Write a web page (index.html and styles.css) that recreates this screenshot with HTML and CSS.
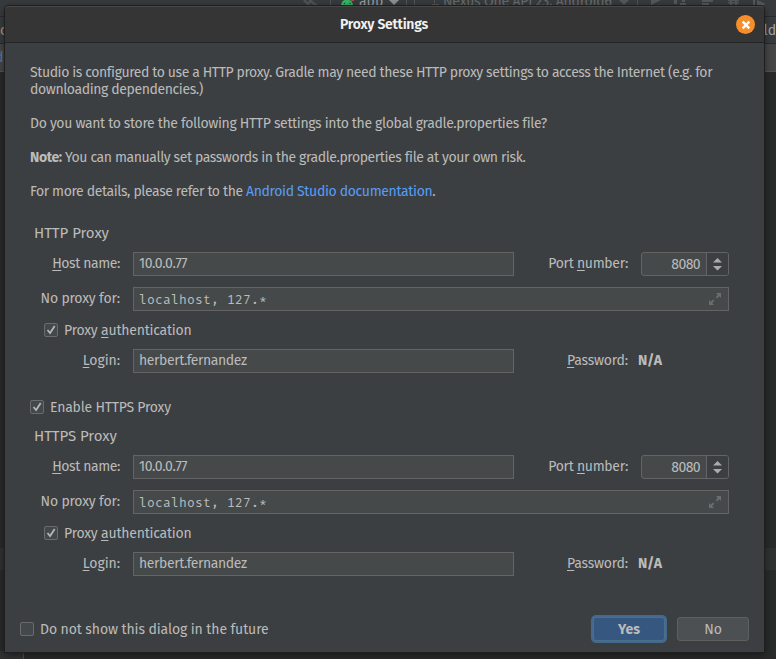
FILE: index.html
```html
<!DOCTYPE html>
<html lang="en">
<head>
<meta charset="utf-8">
<title>Proxy Settings</title>
<link rel="stylesheet" href="styles.css">
</head>
<body>
<div class="ide" aria-hidden="true">
  <div class="ide-toolbar">
    <svg class="ide-tools" width="776" height="16" viewBox="0 0 776 16">
      <path d="M304 0l4 4 4-4M309 0l8 6" stroke="#505254" stroke-width="2.5" fill="none"/>
      <path d="M330.500 0v8M406.500 0v8M414.500 0v8M637.500 0v8" stroke="#525557"/>
      <path d="M341 5.500a6 6 0 0 1 12 0z" fill="#35b565"/>
      <circle cx="344.500" cy="3.500" r=".7" fill="#303335"/><circle cx="350" cy="3.500" r=".7" fill="#303335"/>
      <path d="M351 0h3v1h-3z" fill="#bd4b4b"/>
      <path d="M389 0h10l-5 5z" fill="#8d9092"/>
      <path d="M432 4.500h7M434.500 0v3" stroke="#555859"/>
      <path d="M619 0h10l-5 5zM651 0h10l-10 5zM674 0h3v4h-3zM682 0h3v2h-3zM680 3h6v2h-6zM702 0h11v2h-11zM702 3h7v2h-7zM728 0h11v1h-11zM730 0h2v5h-2zM735 0h2v5h-2zM728 2h11v1.500h-11zM753 0h2v5h-2zM757 0l9 4-5 2-4 1z" fill="#555859"/>
    </svg>
    <span class="ide-app">app</span>
    <span class="ide-device">Nexus One API 23, Android6</span>
  </div>
  <div class="ide-nav"><span class="ide-nav-left">lo</span><span>ld</span></div>
  <div class="ide-tabs"><span>d</span></div>
  <div class="ide-editor"><div class="ide-panel"></div><div class="ide-stripe"></div></div>
</div>

<main class="dialog">
  <header class="titlebar">
    <h1>Proxy Settings</h1>
    <button class="close" aria-label="Close"><svg width="18" height="18" viewBox="0 0 18 18"><path d="M5.700 5.700l6.600 6.600M12.300 5.700l-6.600 6.600" stroke="#fff" stroke-width="2.400"/></svg></button>
  </header>
  <div class="content">
    <section class="message">
      <p><span class="m1">Studio is configured to use a HTTP proxy. Gradle may need these HTTP proxy settings to access the Internet (e.g. for</span><br><span>downloading dependencies.)</span></p>
      <p class="m3">Do you want to store the following HTTP settings into the global gradle.properties file?</p>
      <p><b>Note:</b> You can manually set passwords in the gradle.properties file at your own risk.</p>
      <p>For more details, please refer to the <a>Android Studio documentation</a>.</p>
    </section>

    <section class="proxy">
      <h2>HTTP Proxy</h2>
      <div class="row">
        <label class="host"><u>H</u>ost name:</label><div class="field">10.0.0.77</div>
        <label class="port">Port <u>n</u>umber:</label>
        <div class="spinner"><span>8080</span><svg width="21" height="22" viewBox="0 0 21 22"><path d="M6 9.500h9L10.500 5zM6 13h9l-4.500 4.500z" fill="#a9abac"/></svg></div>
      </div>
      <div class="row second">
        <label>No proxy for:</label><div class="field mono wide">localhost, 127.*<svg width="14" height="14" viewBox="0 0 14 14"><path d="M8 1h5v5l-1.700-1.700L9 6.500 7.700 5.200 9.800 3zM1 8l1.800 1.700L5 7.500l1.300 1.300L4.200 11 6 13H1z" fill="#686f71"/></svg></div>
      </div>
      <div class="check auth"><i class="box"><svg width="14" height="14" viewBox="0 0 14 14"><path d="M3.500 7l2.600 3 4.600-7" fill="none" stroke="#b5b7b7" stroke-width="1.800"/></svg></i><span>Proxy <u>a</u>uthentication</span></div>
      <div class="row third">
        <label class="login"><u>L</u>ogin:</label><div class="field">herbert.fernandez</div>
        <label><u>P</u>assword:</label><b class="na">N/A</b>
      </div>
    </section>

    <div class="check enable"><i class="box"><svg width="14" height="14" viewBox="0 0 14 14"><path d="M3.500 7l2.600 3 4.600-7" fill="none" stroke="#b5b7b7" stroke-width="1.800"/></svg></i><span>Enable HTTPS Proxy</span></div>

    <section class="proxy https">
      <h2>HTTPS Proxy</h2>
      <div class="row">
        <label class="host"><u>H</u>ost name:</label><div class="field">10.0.0.77</div>
        <label class="port">Port <u>n</u>umber:</label>
        <div class="spinner"><span>8080</span><svg width="21" height="22" viewBox="0 0 21 22"><path d="M6 9.500h9L10.500 5zM6 13h9l-4.500 4.500z" fill="#a9abac"/></svg></div>
      </div>
      <div class="row second">
        <label>No proxy for:</label><div class="field mono wide">localhost, 127.*<svg width="14" height="14" viewBox="0 0 14 14"><path d="M8 1h5v5l-1.700-1.700L9 6.500 7.700 5.200 9.800 3zM1 8l1.800 1.700L5 7.500l1.300 1.300L4.200 11 6 13H1z" fill="#686f71"/></svg></div>
      </div>
      <div class="check auth"><i class="box"><svg width="14" height="14" viewBox="0 0 14 14"><path d="M3.500 7l2.600 3 4.600-7" fill="none" stroke="#b5b7b7" stroke-width="1.800"/></svg></i><span>Proxy <u>a</u>uthentication</span></div>
      <div class="row third">
        <label class="login"><u>L</u>ogin:</label><div class="field">herbert.fernandez</div>
        <label><u>P</u>assword:</label><b class="na">N/A</b>
      </div>
    </section>
  </div>
  <footer>
    <div class="check again"><i class="box"></i><span>Do not show this dialog in the future</span></div>
    <button class="btn yes">Yes</button>
    <button class="btn">No</button>
  </footer>
</main>
</body>
</html>
```
FILE: styles.css
```css
* { box-sizing: border-box; }
body {
  margin: 0;
  width: 776px;
  height: 659px;
  overflow: hidden;
  position: relative;
  background: #292929;
  color: #bbbbbb;
  font: 14px/17px "Fira Sans", "Noto Sans", sans-serif;
  font-stretch: 85%;
}
h1, h2, p { margin: 0; font-weight: 400; }
u { text-decoration: underline; text-underline-offset: 2px; text-decoration-thickness: 1px; text-decoration-skip-ink: none; }
svg { display: block; flex: none; }

.ide { height: 659px; display: flex; flex-direction: column; color: #686b6d; }
.ide-toolbar { position: relative; height: 17px; background: #383b3d; border-bottom: 1px solid #292b2c; }
.ide-tools { position: absolute; left: 0; top: 0; }
.ide-app, .ide-device { position: absolute; top: -7px; white-space: nowrap; }
.ide-app { left: 359px; color: #9a9c9e; }
.ide-device { left: 443px; letter-spacing: -.2px; }
.ide-nav { height: 27px; padding: 5px 0 0; display: flex; justify-content: space-between; background: #393c3e; border-bottom: 1px solid #292b2c; color: #a2a4a5; }
.ide-nav-left { margin-left: -4px; color: #b39973; }
.ide-tabs { height: 28px; padding-top: 5px; background: #454645; border-bottom: 1px solid #555; color: #587ca6; }
.ide-tabs span { margin-left: -5px; }
.ide-editor { flex: 1; display: flex; flex-direction: column; justify-content: space-between; padding-top: 476px; background: #292a2a; }
.ide-panel { height: 22px; background: #303131; }
.ide-stripe { height: 8px; width: 24px; background: #303132; border-right: 1px solid #4b4c4c; }

.dialog {
  position: absolute;
  left: 5px;
  top: 6px;
  width: 759px;
  height: 646px;
  display: flex;
  flex-direction: column;
  background: #3c3f41;
  border-radius: 4px 4px 0 0;
  box-shadow: 0 0 0 1px #1e1f20, 0 2px 8px rgba(0, 0, 0, .55);
}
.titlebar {
  height: 37px;
  flex: none;
  display: grid;
  grid-template-columns: 1fr auto 1fr;
  align-items: center;
  padding-right: 9px;
  background: #353535;
  border-top: 1px solid #484848;
  border-bottom: 1px solid #222426;
  border-radius: 4px 4px 0 0;
}
.titlebar h1 { grid-column: 2; padding-left: 8px; font-size: 14px; line-height: 18px; font-weight: 600; letter-spacing: -.25px; color: #f2f2f2; }
.close { justify-self: end; width: 19px; height: 19px; padding: 0; border: 0; border-radius: 50%; background: #f68e2c; }
.close svg { margin: 0 auto; }

.content { padding: 21px 35px 0 25px; }
.message { height: 136px; display: flex; flex-direction: column; gap: 17px; white-space: nowrap; letter-spacing: -.39px; }
.m1 { letter-spacing: -.4px; }
.m3 { letter-spacing: -.34px; }
a { color: #589df6; letter-spacing: -.34px; }

.proxy { margin-top: 25px; }
h2 { padding-left: 4px; font-size: 15px; line-height: 17px; letter-spacing: -.05px; }
.row { display: grid; grid-template-columns: 90px 381px 101px 88px; column-gap: 13px; height: 24px; margin-top: 10px; align-items: center; }
.row label { justify-self: end; white-space: nowrap; letter-spacing: -.18px; padding-bottom: 2px; }
.row .host { letter-spacing: -.4px; }
.row .port { letter-spacing: -.3px; }
.row .login { letter-spacing: -.05px; }
.row.second { margin-top: 11px; }
.row.third { margin-top: 10px; }
.na { padding-bottom: 2px; margin-left: -3px; letter-spacing: -.2px; }
.field { height: 24px; display: flex; align-items: center; padding: 0 5px 1px; background: #45494a; border: 1px solid #646464; white-space: nowrap; letter-spacing: -.4px; }
.wide { grid-column: 2 / 5; justify-content: space-between; padding: 0 6px 0 5px; }
.mono { font: 13px/17px "Fira Mono", "Noto Sans Mono", "DejaVu Sans Mono", monospace; letter-spacing: .2px; }
.spinner { display: flex; justify-content: space-between; height: 24px; background: #45494a; border: 1px solid #646464; border-radius: 3px; }
.spinner span { flex: 1; padding-right: 6px; line-height: 24px; text-align: right; letter-spacing: -.6px; }
.spinner svg { width: 22px; background: #3c3f41; border-left: 1px solid #646464; border-radius: 0 2px 2px 0; }
.check { display: flex; align-items: center; gap: 6px; height: 18px; white-space: nowrap; letter-spacing: -.21px; }
.box { display: block; width: 14px; height: 14px; background: #43494a; border: 1px solid #6b6b6b; border-radius: 2px; }
.box svg { margin: -1px; }
.auth { margin: 10px 0 0 14px; }
.enable { margin-top: 25px; }
.https { margin-top: 12px; }

footer { display: flex; align-items: center; margin-top: auto; padding: 0 15px 9px; height: 37px; }
footer .check { margin-right: auto; letter-spacing: -.1px; }
.btn { width: 72px; height: 24px; padding: 0; background: #4c5052; border: 1px solid #5e6060; border-radius: 3px; font: inherit; color: #bbbbbb; }
.yes { margin-right: 12px; background: #365880; border-color: #4c708c; box-shadow: 0 0 0 2px #43698e; font-weight: 700; }
```
